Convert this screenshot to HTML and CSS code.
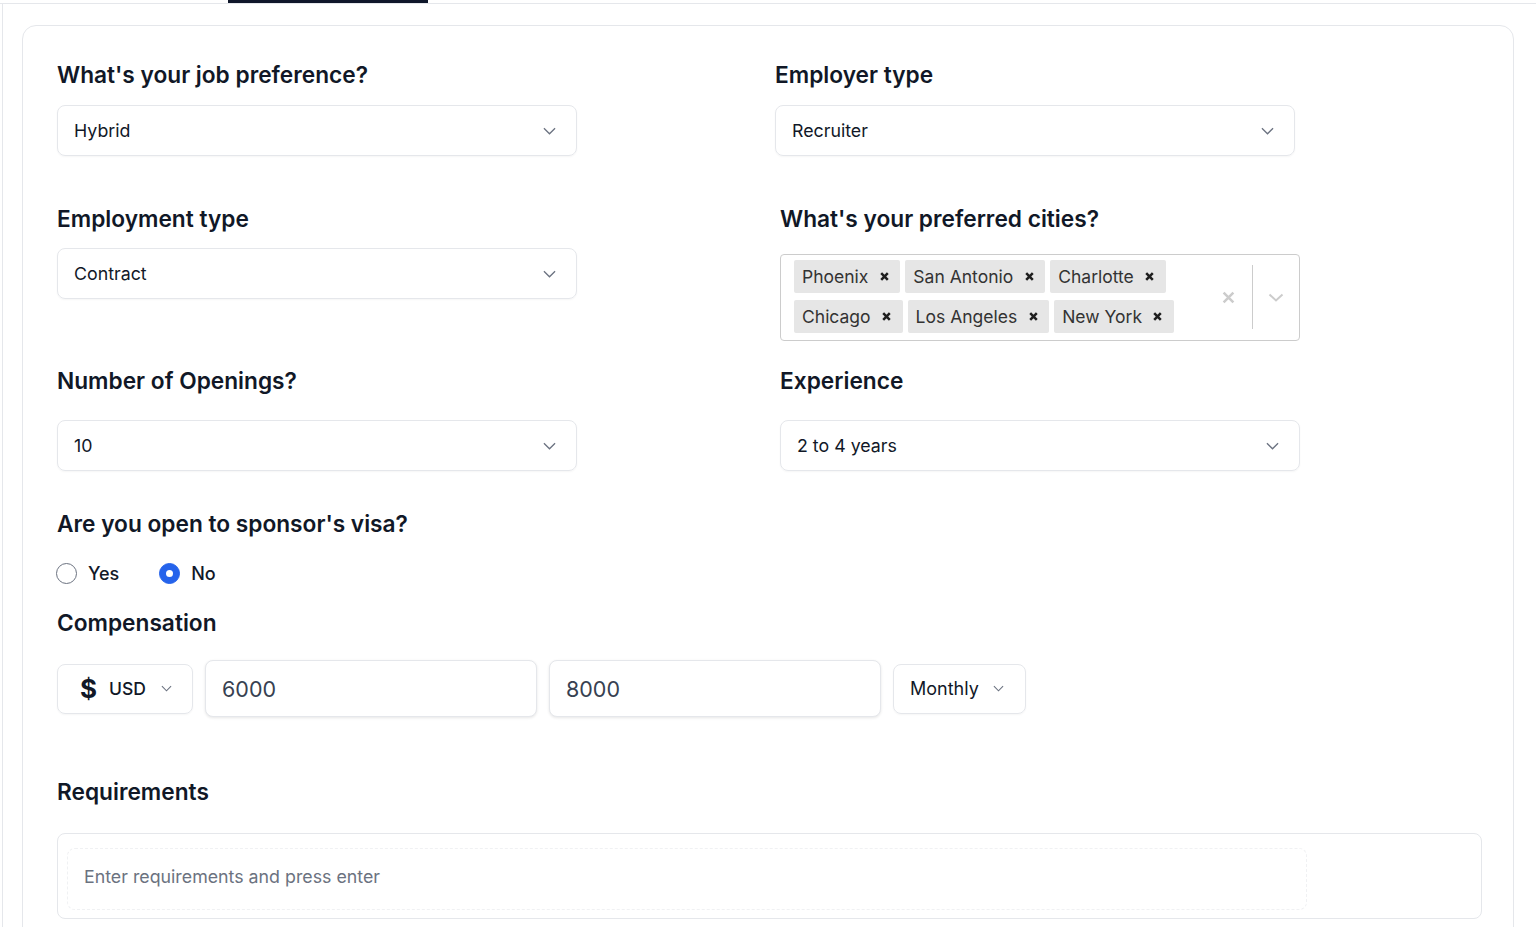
FILE: index.html
```html
<!DOCTYPE html>
<html lang="en">
<head>
    <meta charset="UTF-8">
    <meta name="viewport" content="width=device-width, initial-scale=1.0">
    <title>Job Preferences</title>
    <link rel="stylesheet" href="styles.css">
</head>
<body>

<div class="tabs">
    <div class="tab-indicator"></div>
</div>

<div class="page">
    <div class="card">

        <div class="row">
            <div class="field">
                <label class="field-label">What's your job preference?</label>
                <div class="select gap-16">
                    <span>Hybrid</span>
                    <svg class="chevron" viewBox="0 0 14 8"><path d="M1 1l6 6 6-6"/></svg>
                </div>
            </div>
            <div class="field">
                <label class="field-label">Employer type</label>
                <div class="select gap-16">
                    <span>Recruiter</span>
                    <svg class="chevron" viewBox="0 0 14 8"><path d="M1 1l6 6 6-6"/></svg>
                </div>
            </div>
        </div>

        <div class="row row-2">
            <div class="field">
                <label class="field-label">Employment type</label>
                <div class="select gap-15">
                    <span>Contract</span>
                    <svg class="chevron" viewBox="0 0 14 8"><path d="M1 1l6 6 6-6"/></svg>
                </div>
            </div>
            <div class="field field-shift">
                <label class="field-label">What's your preferred cities?</label>
                <div class="multi gap-21">
                    <div class="multi-values">
                        <div class="tag"><span>Phoenix</span><span class="tag-remove"><svg viewBox="0 0 10 10"><path d="M2 2l6 6M8 2l-6 6"/></svg></span></div>
                        <div class="tag"><span>San Antonio</span><span class="tag-remove"><svg viewBox="0 0 10 10"><path d="M2 2l6 6M8 2l-6 6"/></svg></span></div>
                        <div class="tag"><span>Charlotte</span><span class="tag-remove"><svg viewBox="0 0 10 10"><path d="M2 2l6 6M8 2l-6 6"/></svg></span></div>
                        <div class="tag"><span>Chicago</span><span class="tag-remove"><svg viewBox="0 0 10 10"><path d="M2 2l6 6M8 2l-6 6"/></svg></span></div>
                        <div class="tag"><span>Los Angeles</span><span class="tag-remove"><svg viewBox="0 0 10 10"><path d="M2 2l6 6M8 2l-6 6"/></svg></span></div>
                        <div class="tag"><span>New York</span><span class="tag-remove"><svg viewBox="0 0 10 10"><path d="M2 2l6 6M8 2l-6 6"/></svg></span></div>
                    </div>
                    <div class="multi-clear"><svg viewBox="0 0 12 12"><path d="M1.5 1.5l9 9M10.5 1.5l-9 9"/></svg></div>
                    <div class="multi-sep"></div>
                    <div class="multi-toggle"><svg viewBox="0 0 16 9"><path d="M1.5 1.5l6.5 6 6.5-6"/></svg></div>
                </div>
            </div>
        </div>

        <div class="row row-3">
            <div class="field">
                <label class="field-label">Number of Openings?</label>
                <div class="select gap-25">
                    <span>10</span>
                    <svg class="chevron" viewBox="0 0 14 8"><path d="M1 1l6 6 6-6"/></svg>
                </div>
            </div>
            <div class="field field-shift">
                <label class="field-label">Experience</label>
                <div class="select gap-25">
                    <span>2 to 4 years</span>
                    <svg class="chevron" viewBox="0 0 14 8"><path d="M1 1l6 6 6-6"/></svg>
                </div>
            </div>
        </div>

        <div class="section visa">
            <label class="field-label">Are you open to sponsor's visa?</label>
            <div class="radios">
                <label class="radio-option"><input type="radio" name="visa" value="yes"> Yes</label>
                <label class="radio-option"><input type="radio" name="visa" value="no" checked> No</label>
            </div>
        </div>

        <div class="section comp">
            <label class="field-label">Compensation</label>
            <div class="comp-row">
                <div class="small-select currency">
                    <span class="dollar">$</span>
                    <span class="currency-code">USD</span>
                    <svg class="chevron-sm" viewBox="0 0 12 7"><path d="M1 1l5 5 5-5"/></svg>
                </div>
                <input class="comp-input" type="text" value="6000">
                <input class="comp-input" type="text" value="8000">
                <div class="small-select period">
                    <span>Monthly</span>
                    <svg class="chevron-sm" viewBox="0 0 12 7"><path d="M1 1l5 5 5-5"/></svg>
                </div>
            </div>
        </div>

        <div class="section reqs">
            <label class="field-label">Requirements</label>
            <div class="req-box">
                <input class="req-input" type="text" placeholder="Enter requirements and press enter">
            </div>
        </div>

    </div>
</div>

</body>
</html>
```

FILE: styles.css
```css
* { box-sizing: border-box; }
body { margin: 0; font-family: Inter, "Noto Sans", sans-serif; color: #111827; background: #fff; }

/* top tab strip */
.tabs { height: 4px; border-bottom: 1px solid #e5e7eb; padding-left: 228px; display: flex; }
.tab-indicator { width: 200px; height: 3px; background: #0f172a; }

.page { margin-left: 2px; border-left: 1px solid #e5e7eb; padding: 21px 22px 0 19px; min-height: 923px; }
.card { border: 1px solid #e5e7eb; border-radius: 14px; padding: 35px 31px 40px 34px; }

.row { display: grid; grid-template-columns: 1fr 1fr; column-gap: 11px; }
.row-2 { margin-top: 49px; }
.row-3 { margin-top: 26px; }
.field-shift { padding-left: 5px; }

.field-label { display: block; font-size: 22.7px; line-height: 28px; font-weight: 600; color: #111827; }

.gap-15 { margin-top: 15px; }
.gap-16 { margin-top: 16px; }
.gap-21 { margin-top: 21px; }
.gap-25 { margin-top: 25px; }

.select { width: 520px; height: 51px; border: 1px solid #e5e7eb; border-radius: 8px; padding: 0 20px 0 16px; display: flex; align-items: center; justify-content: space-between; font-size: 17.8px; color: #111827; box-shadow: 0 1px 2px rgba(0,0,0,0.04); }
.chevron { width: 13px; height: 8px; fill: none; stroke: #6b7280; stroke-width: 1.4; }

/* multi select with tags */
.multi { width: 520px; height: 87px; border: 1px solid #cccccc; border-radius: 4px; display: flex; }
.multi-values { flex: 1; display: flex; flex-wrap: wrap; align-content: flex-start; gap: 7px 5px; padding: 5px 0 0 13px; }
.tag { height: 33px; background: #e6e6e6; border-radius: 2px; display: flex; align-items: center; padding-left: 8px; font-size: 17.5px; color: #333; }
.tag-remove { width: 32px; display: flex; justify-content: center; }
.tag-remove svg { width: 11px; height: 11px; fill: none; stroke: #1f1f1f; stroke-width: 2.3; }
.multi-clear { width: 36px; display: flex; align-items: center; justify-content: center; }
.multi-clear svg { width: 13px; height: 13px; fill: none; stroke: #cccccc; stroke-width: 2.3; }
.multi-sep { width: 1px; margin: 10px 0 11px 6px; background: #cccccc; }
.multi-toggle { width: 46px; display: flex; align-items: center; justify-content: center; }
.multi-toggle svg { width: 16px; height: 9px; fill: none; stroke: #cccccc; stroke-width: 2; }

/* visa */
.visa { margin-top: 39px; }
.radios { display: flex; gap: 41px; margin-top: 23px; height: 24px; align-items: center; }
.radio-option { display: flex; align-items: center; gap: 11px; font-size: 18px; font-weight: 500; color: #111827; }
.radio-option input { appearance: none; -webkit-appearance: none; margin: 0 0 0 -1px; width: 21px; height: 21px; border: 1.5px solid #6b7280; border-radius: 50%; display: grid; place-items: center; }
.radio-option input:checked { background: #2563eb; border-color: #2563eb; }
.radio-option input:checked::after { content: ""; width: 7px; height: 7px; border-radius: 50%; background: #fff; }

/* compensation */
.comp { margin-top: 24px; }
.comp-row { display: flex; align-items: center; gap: 12px; margin-top: 23px; height: 57px; }
.small-select { height: 50px; border: 1px solid #e5e7eb; border-radius: 8px; display: flex; align-items: center; box-shadow: 0 1px 2px rgba(0,0,0,0.04); }
.currency { width: 136px; padding-left: 22px; }
.dollar { font-size: 26px; font-weight: 700; width: 15px; }
.currency-code { font-size: 17.5px; font-weight: 500; margin-left: 14px; }
.currency .chevron-sm { margin-left: 15px; }
.period { width: 133px; padding-left: 16px; font-size: 18px; }
.period .chevron-sm { margin-left: 14px; }
.chevron-sm { width: 11px; height: 7px; fill: none; stroke: #6b7280; stroke-width: 1.2; }
.comp-input { width: 332px; height: 57px; border: 1px solid #e5e7eb; border-radius: 8px; padding: 0 16px; font-family: inherit; font-size: 21.5px; color: #374151; box-shadow: 0 1px 3px rgba(0,0,0,0.1); outline: none; }

/* requirements */
.reqs { margin-top: 61px; }
.req-box { margin-top: 27px; height: 86px; border: 1px solid #e5e7eb; border-radius: 8px; padding: 14px 174px 8px 9px; }
.req-input { width: 100%; height: 62px; border: 1px dashed #f0f1f3; border-radius: 8px; padding: 0 16px 5px; font-family: inherit; font-size: 17.8px; color: #111827; outline: none; }
.req-input::placeholder { color: #6b7280; }
```
